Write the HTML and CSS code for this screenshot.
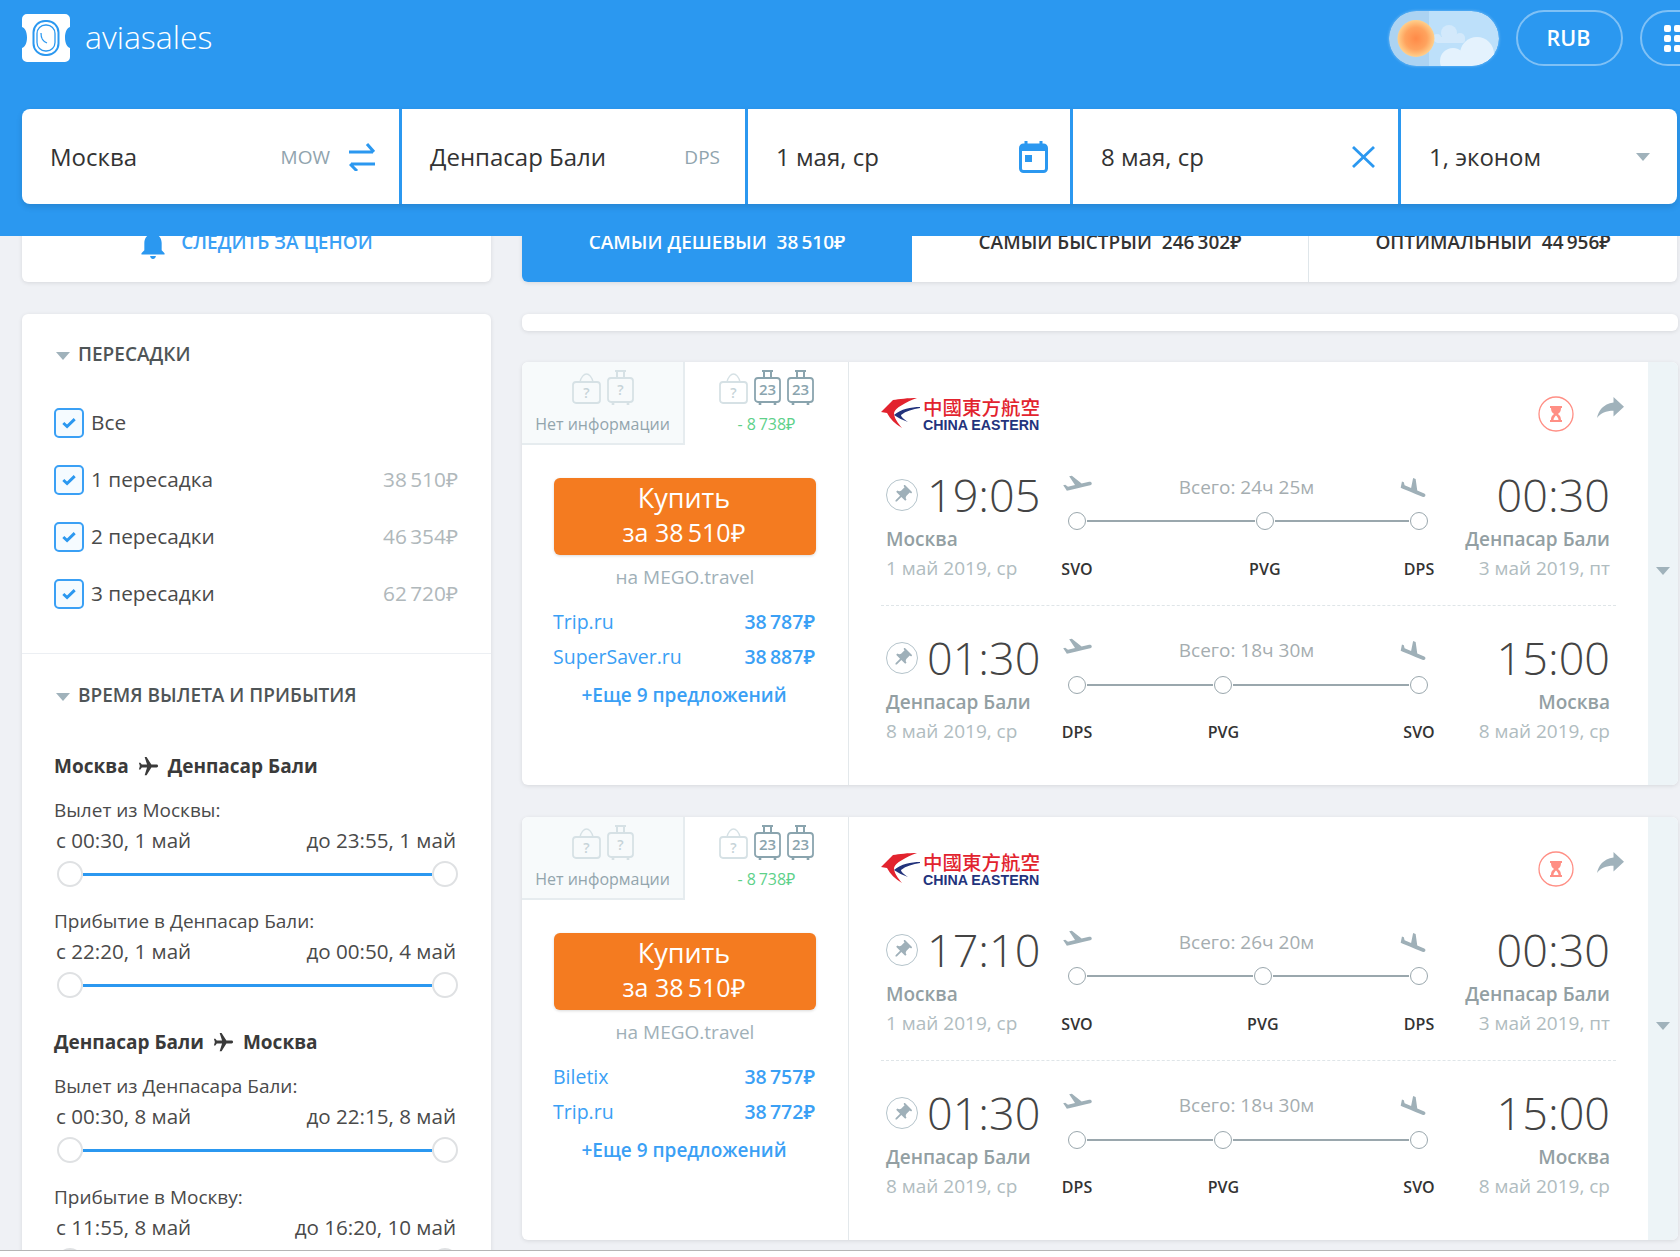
FILE: index.html
```html
<!DOCTYPE html>
<html lang="ru">
<head>
    <meta charset="UTF-8">
    <title>Aviasales</title>
    <link rel="stylesheet" href="styles.css">
</head>
<body>
    <svg class="sprite" xmlns="http://www.w3.org/2000/svg">
        <symbol id="takeoff" viewBox="1 3 22 14" preserveAspectRatio="none"><path d="M22.07 9.64c-.21-.8-1.04-1.28-1.84-1.06L14.92 10l-6.9-6.43-1.93.51 4.14 7.17-4.97 1.33-1.97-1.54-1.45.39 1.82 3.16.77 1.33 1.6-.43 5.31-1.42 4.35-1.16L21 11.49c.81-.23 1.28-1.05 1.07-1.85z"/></symbol>
        <symbol id="landing" viewBox="2 1 20 17" preserveAspectRatio="none"><path transform="rotate(10 12 9)" d="M9.68 13.27l4.35 1.16 5.31 1.42c.8.21 1.62-.26 1.84-1.06.21-.8-.26-1.62-1.06-1.84l-5.31-1.42-2.76-9.02L10.12 2v8.28L5.15 8.95l-.93-2.32-1.45-.39v5.17l1.6.43 5.31 1.43z"/></symbol>
        <symbol id="plane" viewBox="0 0 24 24"><path transform="rotate(90 12 12)" d="M21 16v-2l-8-5V3.5c0-.83-.67-1.5-1.5-1.5S10 2.67 10 3.5V9l-8 5v2l8-2.5V19l-2 1.5V22l3.5-1 3.5 1v-1.5L13 19v-5.5l8 2.5z"/></symbol>
        <symbol id="pin" viewBox="0 0 24 24"><path transform="rotate(45 12 12)" d="M16 9V4h1c.55 0 1-.45 1-1s-.45-1-1-1H7c-.55 0-1 .45-1 1s.45 1 1 1h1v5c0 1.66-1.34 3-3 3v2h5.97v7l1 1 1-1v-7H19v-2c-1.66 0-3-1.34-3-3z"/></symbol>
        <symbol id="share" viewBox="3 5 18 15" preserveAspectRatio="none"><path transform="matrix(-1 0 0 1 24 0)" d="M10 9V5l-7 7 7 7v-4.1c5 0 8.5 1.6 11 5.1-1-5-4-10-11-11z"/></symbol>
        <symbol id="check" viewBox="0 0 16 16"><path d="M1.500 8l4.300 4 8.700-8.500" fill="none" stroke="currentColor" stroke-width="3.400"/></symbol>
        <symbol id="bag" viewBox="0 0 29 31"><path d="M8 9c1-5 4-8 6.500-8s5.500 3 6.500 8" fill="none" stroke="currentColor" stroke-width="1.400"/><rect x="1" y="9" width="27" height="21" rx="3" fill="none" stroke="currentColor" stroke-width="1.800"/></symbol>
        <symbol id="case" viewBox="0 0 27 36"><path d="M8 1h11M10 1v7M17 1v7" fill="none" stroke="currentColor" stroke-width="2"/><rect x="1" y="8" width="25" height="24" rx="3" fill="none" stroke="currentColor" stroke-width="1.800"/><path d="M6 32v3M21 32v3" stroke="currentColor" stroke-width="2.600"/></symbol>
        <symbol id="hourglass" viewBox="0 0 36 36"><ellipse cx="18" cy="18" rx="17" ry="17" fill="none" stroke="#ff8f85" stroke-width="1.300"/><path d="M12 10h12v2h-1c0 4-2 5-3 6 1 1 3 2 3 6h1v2H12v-2h1c0-4 2-5 3-6-1-1-3-2-3-6h-1zm3.500 14h5c0-2-1.500-3.500-2.500-4.500-1 1-2.500 2.500-2.500 4.500z" fill="#ff8f85"/></symbol>
        <symbol id="swoosh" viewBox="0 0 39 32"><path d="M36 1C27 1 18 2 12 3L0 15l6 1c3 6 8 11 15 15-4-5-8-10-8-15 1-5 12-11 23-15z" fill="#e2232e"/><path d="M39 10c-9 0-19 2-26 8 4 3 9 5 14 7-4-3-7-5-7-7 5-4 12-6 19-7z" fill="#23337c"/></symbol>
    </svg>

    <div class="page">
        <header class="header">
            <div class="top-row">
                <a class="logo">
                    <svg class="logo-mark" viewBox="0 0 48 48">
                        <path d="M5 0h38a5 5 0 0 1 5 5v8c-3 1-5 5-5 10.500s2 9.500 5 10.500v9a5 5 0 0 1-5 5H5a5 5 0 0 1-5-5v-9c3-1 5-5 5-10.500S3 14 0 13V5a5 5 0 0 1 5-5z" fill="#fff"/>
                        <rect x="11.500" y="7" width="25" height="34" rx="11.500" fill="none" stroke="#2b98f0" stroke-width="2"/>
                        <rect x="15" y="11" width="18" height="26" rx="8.500" fill="none" stroke="#2b98f0" stroke-width="1.300"/>
                        <path d="M19 19c0 5 1 8 6 10" fill="none" stroke="#2b98f0" stroke-width="1.300"/>
                    </svg>
                    <span class="logo-text">aviasales</span>
                </a>
                <div class="top-actions">
                    <svg class="daynight" viewBox="0 0 110 55">
                        <defs>
                            <radialGradient id="sun"><stop offset="0" stop-color="#ff8a48"/><stop offset=".6" stop-color="#ffa35e"/><stop offset="1" stop-color="#ffd08c"/></radialGradient>
                            <clipPath id="pill"><rect width="110" height="55" rx="27.500"/></clipPath>
                        </defs>
                        <g clip-path="url(#pill)">
                            <rect width="110" height="55" fill="#bde0fa"/>
                            <rect width="40" height="55" fill="#9cc6ea" opacity=".5"/>
                            <g fill="#d3e9fb"><circle cx="60" cy="22" r="8"/><circle cx="48" cy="27" r="4"/><circle cx="71" cy="27" r="5"/><rect x="46" y="26" width="30" height="6" rx="3"/></g>
                            <g fill="#e4f2fd"><circle cx="64" cy="50" r="13"/><circle cx="88" cy="43" r="17"/><circle cx="106" cy="52" r="10"/></g>
                            <circle cx="27" cy="27.500" r="18.500" fill="url(#sun)"/>
                        </g>
                    </svg>
                    <button class="pill">RUB</button>
                    <button class="pill pill-apps">
                        <span class="dots"><i></i><i></i><i></i><i></i><i></i><i></i><i></i><i></i><i></i></span>
                    </button>
                </div>
            </div>
            <form class="search">
                <div class="field field-origin">
                    <span class="field-value">Москва</span>
                    <span class="iata">MOW</span>
                    <svg class="swap" viewBox="0 0 26 28"><path d="M0 9h24M18 1l7 8M26 21H2M8 28l-7-7" fill="none" stroke="#2b98f0" stroke-width="3"/></svg>
                </div>
                <div class="field field-dest">
                    <span class="field-value">Денпасар Бали</span>
                    <span class="iata">DPS</span>
                </div>
                <div class="field field-depart">
                    <span class="field-value">1 мая, ср</span>
                    <svg class="calendar" viewBox="0 0 29 32">
                        <path d="M7 0v5M22 0v5" stroke="#2b98f0" stroke-width="3"/>
                        <rect x="1.500" y="4" width="26" height="26.500" rx="3" fill="none" stroke="#2b98f0" stroke-width="3"/>
                        <rect x="1.500" y="4" width="26" height="6" fill="#2b98f0"/>
                        <rect x="6" y="14" width="7" height="7" fill="#2b98f0"/>
                    </svg>
                </div>
                <div class="field field-return">
                    <span class="field-value">8 мая, ср</span>
                    <svg class="clear" viewBox="0 0 23 22"><path d="M1 1l21 20M22 1L1 21" fill="none" stroke="#2b98f0" stroke-width="2.800"/></svg>
                </div>
                <div class="field field-cabin">
                    <span class="field-value">1, эконом</span>
                    <span class="caret caret-search"></span>
                </div>
            </form>
        </header>

        <main class="content">
            <aside class="sidebar">
                <div class="card subscribe">
                    <svg class="bell" viewBox="3 2 18 20"><path d="M12 22c1.100 0 2-.9 2-2h-4c0 1.100.9 2 2 2zm6-6v-5c0-3.070-1.630-5.640-4.500-6.320V4c0-.83-.67-1.500-1.500-1.500s-1.500.67-1.500 1.500v.68C7.640 5.360 6 7.920 6 11v5l-2 2v1h16v-1l-2-2z"/></svg>
                    <span>СЛЕДИТЬ ЗА ЦЕНОЙ</span>
                </div>

                <div class="card filters">
                    <section class="filter filter-stops">
                        <h3 class="filter-title"><span class="caret"></span>ПЕРЕСАДКИ</h3>
                        <ul class="stops">
                            <li class="stop-row"><span class="checkbox"><svg><use href="#check"/></svg></span><span class="stop-name">Все</span></li>
                            <li class="stop-row"><span class="checkbox"><svg><use href="#check"/></svg></span><span class="stop-name">1 пересадка</span><span class="stop-price">38&thinsp;510₽</span></li>
                            <li class="stop-row"><span class="checkbox"><svg><use href="#check"/></svg></span><span class="stop-name">2 пересадки</span><span class="stop-price">46&thinsp;354₽</span></li>
                            <li class="stop-row"><span class="checkbox"><svg><use href="#check"/></svg></span><span class="stop-name">3 пересадки</span><span class="stop-price">62&thinsp;720₽</span></li>
                        </ul>
                    </section>

                    <section class="filter filter-time">
                        <h3 class="filter-title"><span class="caret"></span>ВРЕМЯ ВЫЛЕТА И ПРИБЫТИЯ</h3>

                        <h4 class="direction direction-first">Москва <svg class="direction-plane"><use href="#plane"/></svg> Денпасар Бали</h4>
                        <div class="slot">
                            <div class="slot-label">Вылет из Москвы:</div>
                            <div class="slot-range"><span>с 00:30, 1 май</span><span>до 23:55, 1 май</span></div>
                            <div class="slider"><i class="handle"></i><i class="track"></i><i class="handle"></i></div>
                        </div>
                        <div class="slot">
                            <div class="slot-label">Прибытие в Денпасар Бали:</div>
                            <div class="slot-range"><span>с 22:20, 1 май</span><span>до 00:50, 4 май</span></div>
                            <div class="slider"><i class="handle"></i><i class="track"></i><i class="handle"></i></div>
                        </div>

                        <h4 class="direction">Денпасар Бали <svg class="direction-plane"><use href="#plane"/></svg> Москва</h4>
                        <div class="slot">
                            <div class="slot-label">Вылет из Денпасара Бали:</div>
                            <div class="slot-range"><span>с 00:30, 8 май</span><span>до 22:15, 8 май</span></div>
                            <div class="slider"><i class="handle"></i><i class="track"></i><i class="handle"></i></div>
                        </div>
                        <div class="slot">
                            <div class="slot-label">Прибытие в Москву:</div>
                            <div class="slot-range"><span>с 11:55, 8 май</span><span>до 16:20, 10 май</span></div>
                            <div class="slider"><i class="handle"></i><i class="track"></i><i class="handle"></i></div>
                        </div>
                    </section>
                </div>
            </aside>

            <section class="results">
                <div class="sort-tabs">
                    <div class="sort-tab sort-tab-cheap">САМЫЙ ДЕШЕВЫЙ&nbsp; 38&thinsp;510₽</div>
                    <div class="sort-tab sort-tab-fast">САМЫЙ БЫСТРЫЙ&nbsp; 246&thinsp;302₽</div>
                    <div class="sort-tab sort-tab-best">ОПТИМАЛЬНЫЙ&nbsp; 44&thinsp;956₽</div>
                </div>
                <div class="card notice"></div>

                <article class="card ticket">
                    <div class="ticket-buy">
                        <div class="baggage">
                            <div class="baggage-tab baggage-tab-active">
                                <div class="baggage-icons">
                                    <svg class="lug lug-bag"><use href="#bag"/><text x="14.500" y="25">?</text></svg>
                                    <svg class="lug lug-case"><use href="#case"/><text x="13.500" y="25">?</text></svg>
                                </div>
                                <div class="baggage-note">Нет информации</div>
                            </div>
                            <div class="baggage-tab">
                                <div class="baggage-icons">
                                    <svg class="lug lug-bag"><use href="#bag"/><text x="14.500" y="25">?</text></svg>
                                    <svg class="lug lug-case lug-on"><use href="#case"/><text x="13.500" y="25">23</text></svg>
                                    <svg class="lug lug-case lug-on"><use href="#case"/><text x="13.500" y="25">23</text></svg>
                                </div>
                                <div class="baggage-note baggage-save">- 8&thinsp;738₽</div>
                            </div>
                        </div>
                        <button class="buy">Купить<span>за 38&thinsp;510₽</span></button>
                        <div class="buy-agent">на MEGO.travel</div>
                        <ul class="offers">
                            <li class="offer"><span>Trip.ru</span><span>38&thinsp;787₽</span></li>
                            <li class="offer"><span>SuperSaver.ru</span><span>38&thinsp;887₽</span></li>
                        </ul>
                        <a class="offers-more">+Еще 9 предложений</a>
                    </div>
                    <div class="ticket-main">
                        <div class="ticket-head">
                            <div class="airline">
                                <svg class="airline-mark"><use href="#swoosh"/></svg>
                                <div class="airline-name"><span class="airline-cn">中國東方航空</span><span class="airline-en">CHINA EASTERN</span></div>
                            </div>
                            <div class="ticket-actions">
                                <svg class="ticket-timer"><use href="#hourglass"/></svg>
                                <svg class="ticket-share"><use href="#share"/></svg>
                            </div>
                        </div>
                        <div class="segment">
                            <div class="seg-side">
                                <div class="seg-time"><span class="pin"><svg><use href="#pin"/></svg></span>19:05</div>
                                <div class="seg-city">Москва</div>
                                <div class="seg-date">1 май 2019, ср</div>
                            </div>
                            <div class="seg-route">
                                <div class="seg-info"><svg class="ico-takeoff"><use href="#takeoff"/></svg><span>Всего: 24ч 25м</span><svg class="ico-landing"><use href="#landing"/></svg></div>
                                <div class="route">
                                    <div class="route-stop"><i></i><b>SVO</b></div>
                                    <div class="route-leg" style="flex-grow:170"></div>
                                    <div class="route-stop"><i></i><b>PVG</b></div>
                                    <div class="route-leg" style="flex-grow:136"></div>
                                    <div class="route-stop"><i></i><b>DPS</b></div>
                                </div>
                            </div>
                            <div class="seg-side seg-side-end">
                                <div class="seg-time">00:30</div>
                                <div class="seg-city">Денпасар Бали</div>
                                <div class="seg-date">3 май 2019, пт</div>
                            </div>
                        </div>
                        <div class="segment">
                            <div class="seg-side">
                                <div class="seg-time"><span class="pin"><svg><use href="#pin"/></svg></span>01:30</div>
                                <div class="seg-city">Денпасар Бали</div>
                                <div class="seg-date">8 май 2019, ср</div>
                            </div>
                            <div class="seg-route">
                                <div class="seg-info"><svg class="ico-takeoff"><use href="#takeoff"/></svg><span>Всего: 18ч 30м</span><svg class="ico-landing"><use href="#landing"/></svg></div>
                                <div class="route">
                                    <div class="route-stop"><i></i><b>DPS</b></div>
                                    <div class="route-leg" style="flex-grow:128"></div>
                                    <div class="route-stop"><i></i><b>PVG</b></div>
                                    <div class="route-leg" style="flex-grow:178"></div>
                                    <div class="route-stop"><i></i><b>SVO</b></div>
                                </div>
                            </div>
                            <div class="seg-side seg-side-end">
                                <div class="seg-time">15:00</div>
                                <div class="seg-city">Москва</div>
                                <div class="seg-date">8 май 2019, ср</div>
                            </div>
                        </div>
                    </div>
                    <div class="ticket-expand"><span class="caret"></span></div>
                </article>

                <article class="card ticket">
                    <div class="ticket-buy">
                        <div class="baggage">
                            <div class="baggage-tab baggage-tab-active">
                                <div class="baggage-icons">
                                    <svg class="lug lug-bag"><use href="#bag"/><text x="14.500" y="25">?</text></svg>
                                    <svg class="lug lug-case"><use href="#case"/><text x="13.500" y="25">?</text></svg>
                                </div>
                                <div class="baggage-note">Нет информации</div>
                            </div>
                            <div class="baggage-tab">
                                <div class="baggage-icons">
                                    <svg class="lug lug-bag"><use href="#bag"/><text x="14.500" y="25">?</text></svg>
                                    <svg class="lug lug-case lug-on"><use href="#case"/><text x="13.500" y="25">23</text></svg>
                                    <svg class="lug lug-case lug-on"><use href="#case"/><text x="13.500" y="25">23</text></svg>
                                </div>
                                <div class="baggage-note baggage-save">- 8&thinsp;738₽</div>
                            </div>
                        </div>
                        <button class="buy">Купить<span>за 38&thinsp;510₽</span></button>
                        <div class="buy-agent">на MEGO.travel</div>
                        <ul class="offers">
                            <li class="offer"><span>Biletix</span><span>38&thinsp;757₽</span></li>
                            <li class="offer"><span>Trip.ru</span><span>38&thinsp;772₽</span></li>
                        </ul>
                        <a class="offers-more">+Еще 9 предложений</a>
                    </div>
                    <div class="ticket-main">
                        <div class="ticket-head">
                            <div class="airline">
                                <svg class="airline-mark"><use href="#swoosh"/></svg>
                                <div class="airline-name"><span class="airline-cn">中國東方航空</span><span class="airline-en">CHINA EASTERN</span></div>
                            </div>
                            <div class="ticket-actions">
                                <svg class="ticket-timer"><use href="#hourglass"/></svg>
                                <svg class="ticket-share"><use href="#share"/></svg>
                            </div>
                        </div>
                        <div class="segment">
                            <div class="seg-side">
                                <div class="seg-time"><span class="pin"><svg><use href="#pin"/></svg></span>17:10</div>
                                <div class="seg-city">Москва</div>
                                <div class="seg-date">1 май 2019, ср</div>
                            </div>
                            <div class="seg-route">
                                <div class="seg-info"><svg class="ico-takeoff"><use href="#takeoff"/></svg><span>Всего: 26ч 20м</span><svg class="ico-landing"><use href="#landing"/></svg></div>
                                <div class="route">
                                    <div class="route-stop"><i></i><b>SVO</b></div>
                                    <div class="route-leg" style="flex-grow:168"></div>
                                    <div class="route-stop"><i></i><b>PVG</b></div>
                                    <div class="route-leg" style="flex-grow:138"></div>
                                    <div class="route-stop"><i></i><b>DPS</b></div>
                                </div>
                            </div>
                            <div class="seg-side seg-side-end">
                                <div class="seg-time">00:30</div>
                                <div class="seg-city">Денпасар Бали</div>
                                <div class="seg-date">3 май 2019, пт</div>
                            </div>
                        </div>
                        <div class="segment">
                            <div class="seg-side">
                                <div class="seg-time"><span class="pin"><svg><use href="#pin"/></svg></span>01:30</div>
                                <div class="seg-city">Денпасар Бали</div>
                                <div class="seg-date">8 май 2019, ср</div>
                            </div>
                            <div class="seg-route">
                                <div class="seg-info"><svg class="ico-takeoff"><use href="#takeoff"/></svg><span>Всего: 18ч 30м</span><svg class="ico-landing"><use href="#landing"/></svg></div>
                                <div class="route">
                                    <div class="route-stop"><i></i><b>DPS</b></div>
                                    <div class="route-leg" style="flex-grow:128"></div>
                                    <div class="route-stop"><i></i><b>PVG</b></div>
                                    <div class="route-leg" style="flex-grow:178"></div>
                                    <div class="route-stop"><i></i><b>SVO</b></div>
                                </div>
                            </div>
                            <div class="seg-side seg-side-end">
                                <div class="seg-time">15:00</div>
                                <div class="seg-city">Москва</div>
                                <div class="seg-date">8 май 2019, ср</div>
                            </div>
                        </div>
                    </div>
                    <div class="ticket-expand"><span class="caret"></span></div>
                </article>
            </section>
        </main>
    </div>
</body>
</html>
```

FILE: styles.css
```css
* {
    box-sizing: border-box;
}
html, body {
    margin: 0;
    height: 100%;
    overflow: hidden;
    background: #fff;
}
body {
    font-family: "Open Sans", "Noto Sans", "DejaVu Sans", sans-serif;
    color: #4a4a4a;
}
h3, h4, ul {
    margin: 0;
    padding: 0;
    list-style: none;
}
.sprite {
    display: none;
}
.page {
    height: 1251px;
    overflow: hidden;
    background: #eff1f5;
    border-bottom: 1px solid #b5b5b5;
}

/* header */
.header {
    position: relative;
    z-index: 2;
    height: 236px;
    padding: 10px 3px 0 22px;
    background: #2b98f0;
    overflow: hidden;
}
.top-row {
    display: flex;
    justify-content: space-between;
    margin-right: -70px;
    height: 56px;
}
.logo {
    display: flex;
    align-items: center;
    height: 56px;
}
.logo-mark {
    width: 48px;
    height: 48px;
}
.logo-text {
    margin: 0 0 4px 15px;
    font-size: 32px;
    font-weight: 300;
    color: #fff;
}
.top-actions {
    display: flex;
    align-items: center;
    gap: 17px;
}
.daynight {
    width: 110px;
    height: 55px;
    border-radius: 28px;
    box-shadow: 0 0 3px rgba(255, 255, 255, .4);
}
.pill {
    width: 107px;
    height: 56px;
    padding: 0 2px 2px 0;
    border: 2px solid rgba(255, 255, 255, .4);
    border-radius: 28px;
    background: none;
    color: #fff;
    font: 600 21.500px "Open Sans", sans-serif;
}
.pill-apps {
    display: flex;
    padding: 13px 0 0 22px;
}
.dots {
    display: grid;
    grid-template-columns: repeat(3, 7px);
    grid-auto-rows: 7px;
    gap: 3px;
}
.dots i {
    background: #fff;
    border-radius: 2px;
}

/* search form */
.search {
    display: flex;
    gap: 3px;
    height: 95px;
    margin-top: 43px;
    box-shadow: 0 3px 6px rgba(0, 0, 0, .12);
    border-radius: 8px;
}
.field {
    display: flex;
    align-items: center;
    padding: 0 28px;
    background: #fff;
    font-size: 24px;
    color: #333;
}
.field-value {
    flex: 1;
}
.field-origin {
    width: 377px;
    padding-right: 24px;
    border-radius: 8px 0 0 8px;
}
.field-dest {
    width: 343px;
    padding-right: 25px;
}
.field-depart {
    width: 322px;
    padding-right: 22px;
}
.field-return {
    width: 325px;
    padding-right: 23px;
}
.field-cabin {
    flex: 1;
    padding-right: 27px;
    border-radius: 0 8px 8px 0;
}
.iata {
    font-size: 19px;
    color: #90a4ae;
}
.swap {
    width: 26px;
    height: 28px;
    margin-left: 19px;
}
.calendar {
    width: 29px;
    height: 32px;
}
.clear {
    width: 23px;
    height: 22px;
}
.caret {
    display: inline-block;
    width: 0;
    height: 0;
    border-style: solid;
    border-width: 8px 7.5px 0;
    border-color: #a0b2bb transparent transparent;
}

/* page columns */
.content {
    display: grid;
    grid-template-columns: 469px 1156px;
    gap: 31px;
    margin-top: -20px;
    padding-left: 22px;
}
.card {
    background: #fff;
    border-radius: 6px;
    box-shadow: 0 1px 4px rgba(0, 0, 0, .1);
}

/* sidebar */
.subscribe {
    display: flex;
    justify-content: center;
    gap: 15px;
    height: 66px;
    padding: 14px 0 0 0;
    font-size: 19px;
    font-weight: 600;
    line-height: 24px;
    color: #3aa0f5;
}
.bell {
    width: 26px;
    height: 29px;
    fill: #2b98f0;
}
.filters {
    margin-top: 32px;
    height: 1000px;
}
.filter-title {
    display: flex;
    align-items: center;
    gap: 8px;
    padding-left: 2px;
    font-size: 19px;
    font-weight: 600;
    line-height: 24px;
    color: #4f5557;
}
.filter-title .caret {
    margin-top: 4px;
}
.filter-stops {
    padding: 28px 33px 31px 32px;
    border-bottom: 1px solid #eceff3;
}
.stops {
    margin-top: 28px;
}
.stop-row {
    display: flex;
    align-items: center;
    height: 57px;
    font-size: 20.800px;
    color: #4a4a4a;
}
.checkbox {
    display: flex;
    align-items: center;
    justify-content: center;
    width: 30px;
    height: 30px;
    margin-right: 7px;
    border: 2px solid #3aa0f5;
    border-radius: 5px;
    background: #f5fbff;
    color: #2b98f0;
}
.checkbox svg {
    width: 14px;
    height: 14px;
}
.stop-name {
    flex: 1;
    margin-bottom: 2px;
}
.stop-price {
    margin-bottom: 2px;
    color: #b0b8bb;
}
.filter-time {
    padding: 29px 33px 0 32px;
}
.direction {
    display: flex;
    align-items: center;
    gap: 8px;
    margin-top: 30px;
    font-size: 19px;
    font-weight: 700;
    line-height: 28px;
    color: #3a3a3a;
}
.direction-first {
    margin-top: 45px;
}
.direction-plane {
    width: 23px;
    height: 23px;
    fill: #3a3a3a;
}
.slot {
    margin-top: 21px;
}
.direction + .slot {
    margin-top: 17px;
}
.slot-label {
    font-size: 19px;
    line-height: 26px;
}
.slot-range {
    display: flex;
    justify-content: space-between;
    margin-top: 2px;
    padding: 0 2px;
    font-size: 20.600px;
    line-height: 30px;
}
.slider {
    display: flex;
    align-items: center;
    margin-top: 6px;
    padding-left: 3px;
}
.handle {
    width: 26px;
    height: 26px;
    border: 2px solid #dfe1e3;
    border-radius: 50%;
    background: #fff;
}
.track {
    flex: 1;
    height: 3px;
    background: #2b98f0;
}

/* results */
.sort-tabs {
    display: flex;
    height: 66px;
    margin-right: 1px;
    border-radius: 0 0 6px 6px;
    box-shadow: 0 1px 4px rgba(0, 0, 0, .1);
    background: #fff;
}
.sort-tab {
    padding-top: 14px;
    font-size: 19px;
    font-weight: 600;
    line-height: 24px;
    text-align: center;
    color: #333;
}
.sort-tab-cheap {
    width: 390px;
    border-radius: 0 0 0 6px;
    background: #2b98f0;
    color: #fff;
}
.sort-tab-fast {
    width: 397px;
    border-right: 1px solid #dfe6ea;
}
.sort-tab-best {
    flex: 1;
}
.notice {
    height: 17px;
    margin-top: 32px;
}
.ticket {
    display: flex;
    height: 423px;
    margin-top: 31px;
    overflow: hidden;
}
.ticket + .ticket {
    margin-top: 32px;
}
.ticket-buy {
    width: 327px;
    border-right: 1px solid #e3e8eb;
}
.baggage {
    display: flex;
    height: 83px;
}
.baggage-tab {
    flex: 1;
    padding-top: 8px;
    text-align: center;
}
.baggage-tab-active {
    flex: none;
    width: 163px;
    background: #f7fafb;
    border-right: 2px solid #e6ecef;
    border-bottom: 2px solid #e6ecef;
}
.baggage-icons {
    display: flex;
    justify-content: center;
    gap: 6px;
    height: 36px;
}
.lug {
    color: #d6e1e5;
}
.lug text {
    font-size: 14px;
    font-weight: 600;
    text-anchor: middle;
    fill: #c6d3d8;
}
.lug-bag {
    width: 29px;
    height: 31px;
    margin-top: 3px;
}
.lug-case {
    width: 27px;
    height: 36px;
}
.lug-on {
    color: #8aa4ae;
}
.lug-on text {
    font-size: 15px;
    fill: #8aa4ae;
}
.baggage-note {
    margin-top: 7px;
    font-size: 16px;
    line-height: 22px;
    color: #93a5ad;
}
.baggage-save {
    color: #5ed18a;
}
.buy {
    display: block;
    width: 262px;
    height: 77px;
    margin: 33px auto 0;
    padding: 0 2px 4px 0;
    border: 0;
    border-radius: 6px;
    background: #f47b20;
    box-shadow: 0 1px 3px rgba(0, 0, 0, .15);
    color: #fff;
    font: 500 27px/35px "Open Sans", sans-serif;
}
.buy span {
    display: block;
    font-size: 25px;
    font-weight: 400;
}
.buy-agent {
    margin-top: 8px;
    font-size: 19px;
    line-height: 28px;
    text-align: center;
    color: #a0b0b8;
}
.offers {
    margin: 13px 33px 0 31px;
}
.offer {
    display: flex;
    justify-content: space-between;
    font-size: 19.500px;
    line-height: 35px;
    color: #3aa0f5;
}
.offer span:last-child {
    font-weight: 600;
}
.offers-more {
    display: block;
    margin-top: 7px;
    padding-right: 2px;
    font-size: 19px;
    font-weight: 600;
    line-height: 28px;
    text-align: center;
    color: #3aa0f5;
}
.ticket-main {
    flex: 1;
    padding: 0 32px;
}
.ticket-head {
    display: flex;
    justify-content: space-between;
    height: 79px;
    padding-top: 34px;
}
.airline {
    display: flex;
    gap: 3px;
    padding-top: 1px;
}
.airline-mark {
    width: 39px;
    height: 32px;
}
.airline-name {
    display: flex;
    flex-direction: column;
}
.airline-cn {
    font: 500 19.500px/20px "Noto Sans CJK TC", sans-serif;
    color: #e2232e;
}
.airline-en {
    margin-top: 2px;
    font: 700 14.200px/13px "Liberation Sans", sans-serif;
    color: #23337c;
}
.ticket-actions {
    display: flex;
    gap: 23px;
    margin-right: -8px;
}
.ticket-timer {
    width: 36px;
    height: 36px;
}
.ticket-share {
    width: 27px;
    height: 21px;
    margin-top: 1px;
    fill: #a0b2bb;
}
.segment {
    display: flex;
    height: 165px;
    padding: 29px 6px 0 5px;
    border-bottom: 1px dashed #dfe5e8;
}
.segment:last-child {
    padding-top: 27px;
    border-bottom: 0;
}
.seg-side {
    width: 174px;
}
.seg-side-end {
    width: 170px;
    text-align: right;
}
.seg-time {
    display: flex;
    align-items: center;
    font-size: 45px;
    font-weight: 300;
    line-height: 50px;
    color: #444;
}
.seg-side-end .seg-time {
    justify-content: flex-end;
}
.pin {
    display: flex;
    align-items: center;
    justify-content: center;
    width: 32px;
    height: 32px;
    margin-right: 9px;
    border: 1.500px solid #b5c4cb;
    border-radius: 50%;
}
.pin svg {
    width: 22px;
    height: 22px;
    fill: #9fb0b9;
}
.seg-city {
    margin-top: 5px;
    font-size: 19px;
    font-weight: 600;
    line-height: 28px;
    color: #939fa3;
}
.seg-date {
    margin-top: 1px;
    font-size: 19px;
    line-height: 28px;
    color: #b0bcc0;
}
.seg-route {
    width: 380px;
    padding: 0 12px 0 8px;
}
.seg-info {
    display: flex;
    justify-content: space-between;
    align-items: flex-start;
    height: 33px;
    margin: 5px -5px 0 -6px;
    font-size: 19px;
    line-height: 24px;
    color: #a5adb0;
}
.ico-takeoff {
    width: 31px;
    height: 17px;
    fill: #9fb0b8;
}
.ico-landing {
    width: 28px;
    height: 21px;
    margin: 2px 5px 0 0;
    fill: #9fb0b8;
}
.route {
    display: flex;
    margin-top: 4px;
}
.segment:last-child .route {
    margin-top: 5px;
}
.segment:last-child .route-stop b {
    margin-top: 27px;
}
.route-stop {
    display: flex;
    flex-direction: column;
    align-items: center;
    width: 18px;
    flex: none;
}
.route-stop i {
    flex: none;
    width: 18px;
    height: 18px;
    border: 1.500px solid #9aa7ad;
    border-radius: 50%;
}
.route-stop b {
    margin-top: 28px;
    font-size: 16px;
    font-weight: 600;
    line-height: 22px;
    color: #333;
}
.route-leg {
    height: 2px;
    margin: 8px 1px 0;
    background: #9aa7ad;
}
.ticket-expand {
    display: flex;
    justify-content: center;
    width: 30px;
    padding-top: 205px;
    background: #edf4f7;
}
```
